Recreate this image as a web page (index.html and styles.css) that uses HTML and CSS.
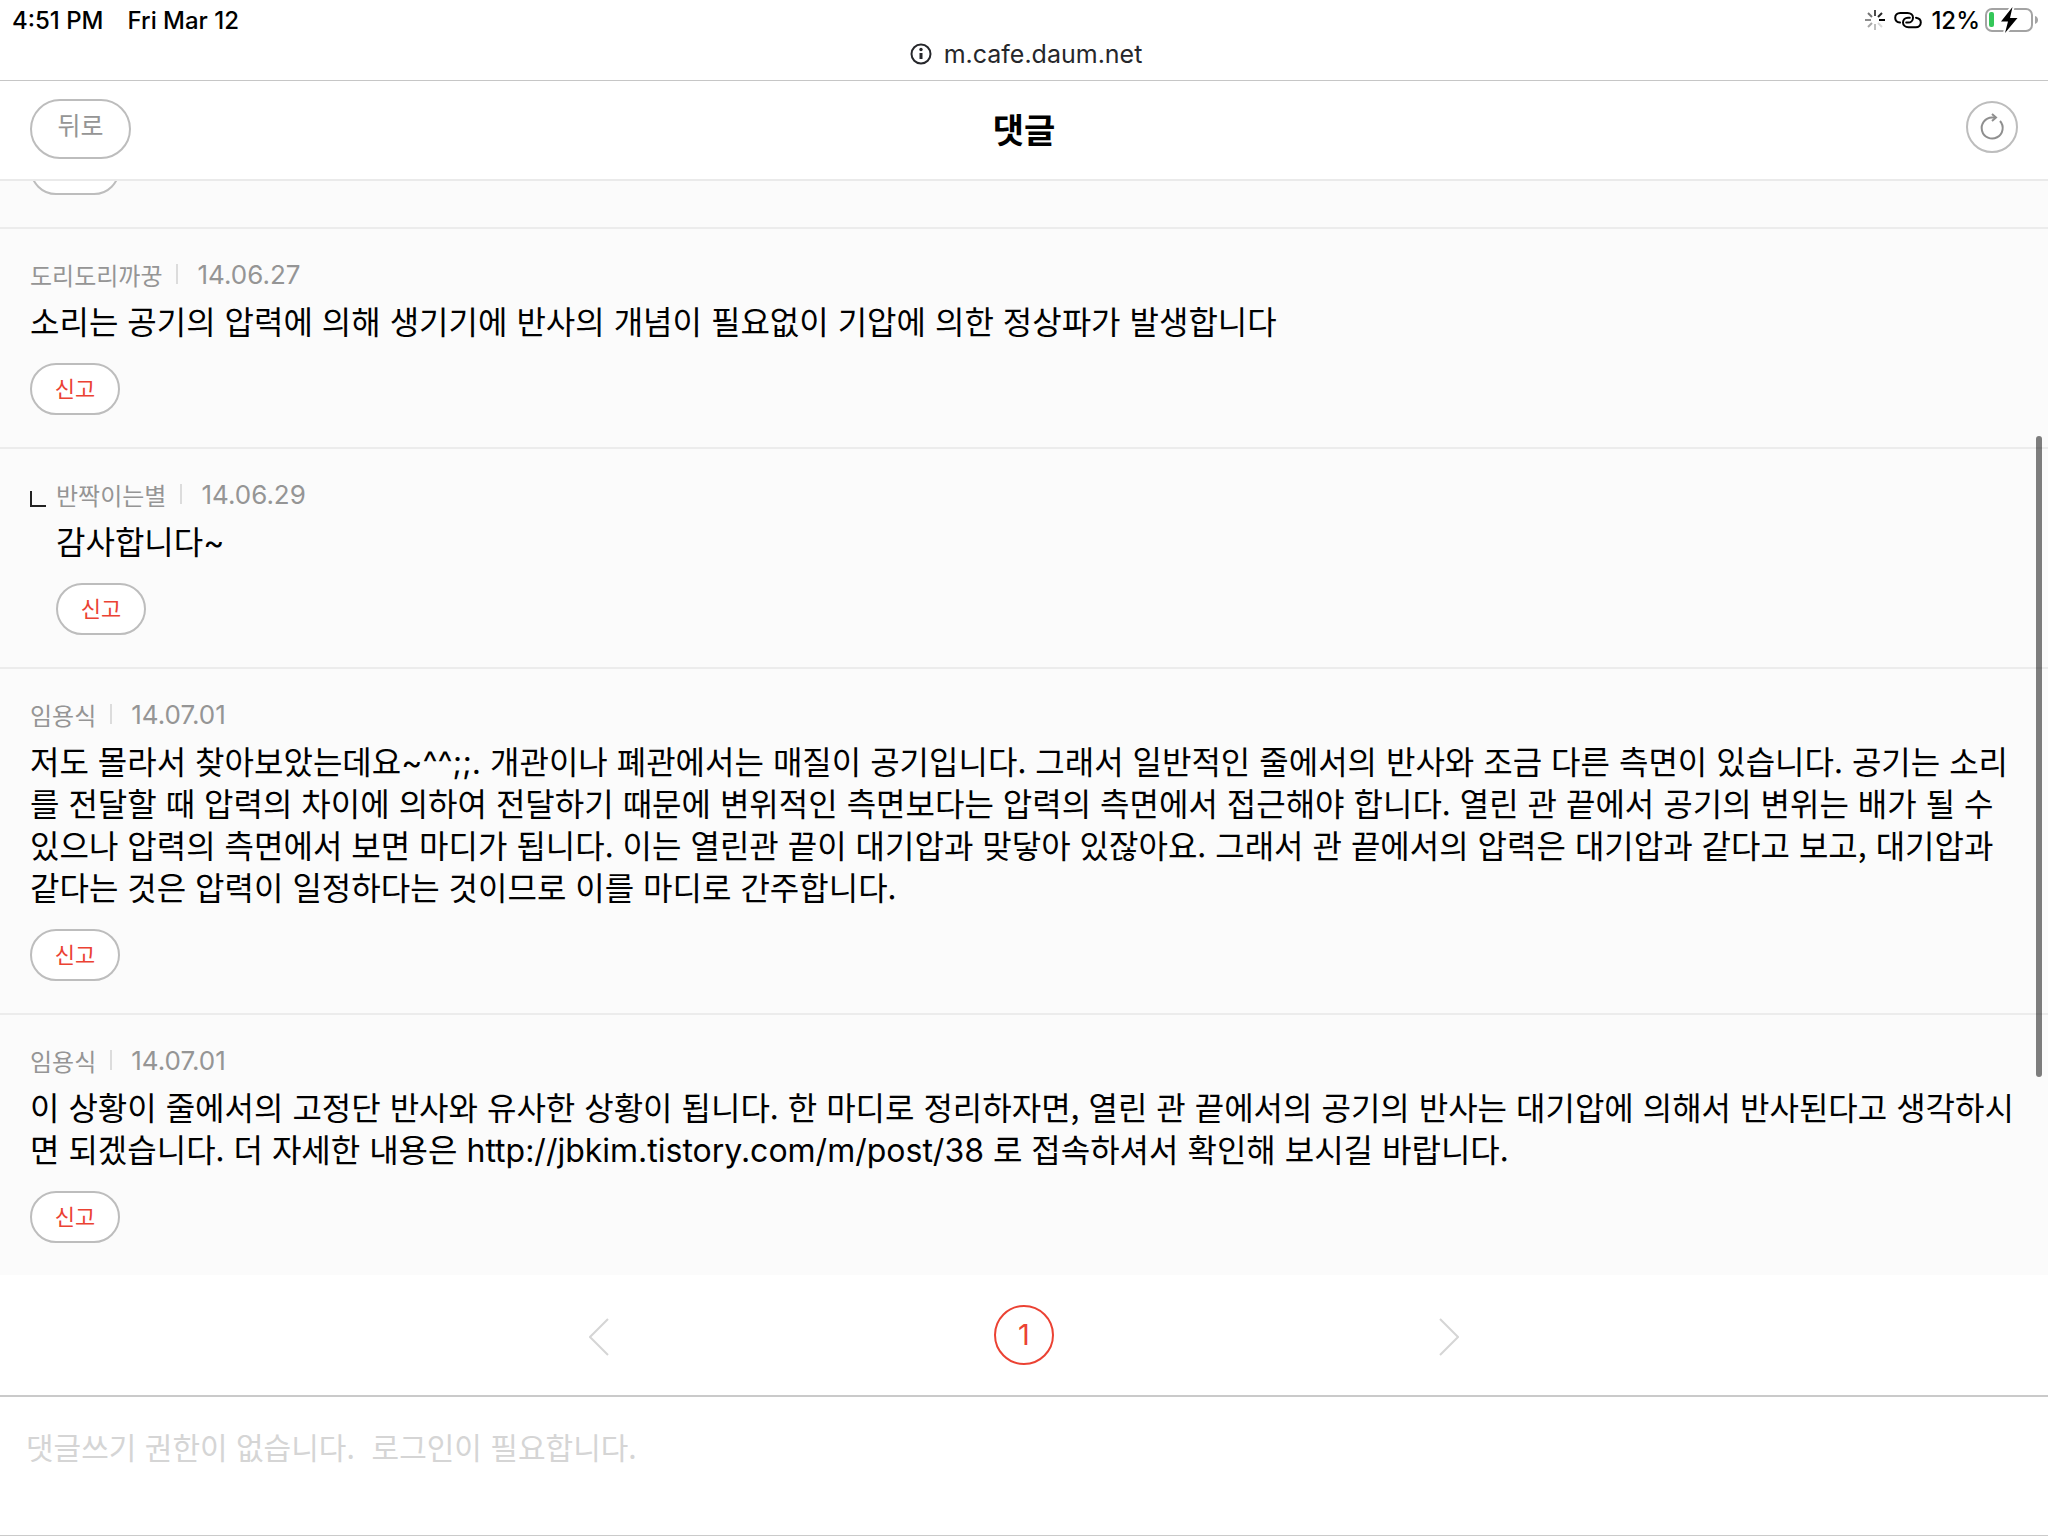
FILE: index.html
```
<!DOCTYPE html>
<html lang="ko">

<head>
    <meta charset="utf-8">
    <meta name="viewport" content="width=device-width, initial-scale=1">
    <title>댓글</title>
    <link rel="stylesheet" href="styles.css">
</head>

<body>
    <div class="browser">
        <div class="status">
            <span class="time">4:51 PM</span>
            <span>Fri Mar 12</span>
            <div class="status_right">
                <svg class="ico_spin" width="20" height="20" viewBox="0 0 20 20" fill="none" stroke="#000" stroke-width="2">
                    <path d="M10 0v6" opacity=".7" />
                    <path d="M17 3l-4 4" opacity=".85" />
                    <path d="M20 10h-6" />
                    <path d="M17 17l-4-4" opacity=".15" />
                    <path d="M10 20v-6" opacity=".25" />
                    <path d="M3 17l4-4" opacity=".35" />
                    <path d="M0 10h6" opacity=".45" />
                    <path d="M3 3l4 4" opacity=".55" />
                </svg>
                <svg class="ico_link" width="28" height="18" viewBox="0 0 28 18" fill="none" stroke="#000" stroke-width="2" stroke-linecap="round">
                    <path d="M6 11.6C2.900 11.200 1.200 9.200 1.200 6.700C1.200 3.800 3.400 2 6.200 2h7.300C16.800 2 19 4 19 6.700c0 2.900-2.200 4.900-5 4.900h-1.800" />
                    <path d="M22 6.700c3.100.4 4.800 2.300 4.800 4.800c0 2.800-2.200 4.700-5 4.700h-7.300C11.200 16.200 9 14.200 9 11.500c0-2.800 2.200-4.800 5-4.800h1.800" />
                </svg>
                <span class="percent">12%</span>
                <svg class="ico_battery" width="53" height="26" viewBox="0 0 53 26">
                    <rect x="1" y="2" width="46" height="22" rx="6" fill="none" stroke="#a3a3a3" stroke-width="2" />
                    <rect x="4" y="5" width="5" height="15" rx="2" fill="#34c759" />
                    <path d="M50 9c2 .6 3 2.200 3 4s-1 3.400-3 4z" fill="#a3a3a3" />
                    <path d="M27.500 0L16 14.500h7L20 26L32.500 11H25z" fill="#000" stroke="#fff" stroke-width="4" stroke-linejoin="round" paint-order="stroke" />
                </svg>
            </div>
        </div>
        <div class="address">
            <svg width="22" height="22" viewBox="0 0 22 22" fill="none" stroke="#26272b" stroke-width="2">
                <circle cx="11" cy="11" r="9.500" />
                <path d="M11 10v6" stroke-width="3" />
                <circle cx="11" cy="6.500" r="1.700" fill="#26272b" stroke="none" />
            </svg>
            <span>m.cafe.daum.net</span>
        </div>
    </div>

    <header class="header">
        <button type="button" class="btn_back">뒤로</button>
        <h1>댓글</h1>
        <button type="button" class="btn_refresh" aria-label="새로고침">
            <svg width="26" height="28" viewBox="0 0 26 28" fill="none" stroke="#8f8f8f" stroke-width="2">
                <path d="M16 4.500H13A10.500 10.500 0 1 0 21 8" />
                <path d="M13 1l4 3.500l-4 3.500" />
            </svg>
        </button>
    </header>

    <main>
        <ul class="comments">
            <li class="comment">
                <button type="button" class="btn_report" aria-label="신고"></button>
            </li>
            <li class="comment">
                <div class="info"><span class="name">도리도리까꿍</span><span class="date">14.06.27</span></div>
                <p>소리는 공기의 압력에 의해 생기기에 반사의 개념이 필요없이 기압에 의한 정상파가 발생합니다</p>
                <button type="button" class="btn_report">신고</button>
            </li>
            <li class="comment reply">
                <div class="info"><span class="name">반짝이는별</span><span class="date">14.06.29</span></div>
                <p>감사합니다<span class="latin">~</span></p>
                <button type="button" class="btn_report">신고</button>
            </li>
            <li class="comment">
                <div class="info"><span class="name">임용식</span><span class="date">14.07.01</span></div>
                <p>저도 몰라서 찾아보았는데요<span class="latin">~^^;;.</span> 개관이나 폐관에서는 매질이 공기입니다. 그래서 일반적인 줄에서의 반사와 조금 다른 측면이 있습니다. 공기는 소리를 전달할 때 압력의 차이에 의하여 전달하기 때문에 변위적인 측면보다는 압력의 측면에서 접근해야 합니다. 열린 관 끝에서 공기의 변위는 배가 될 수 있으나 압력의 측면에서 보면 마디가 됩니다. 이는 열린관 끝이 대기압과 맞닿아 있잖아요. 그래서 관 끝에서의 압력은 대기압과 같다고 보고, 대기압과 같다는 것은 압력이 일정하다는 것이므로 이를 마디로 간주합니다.</p>
                <button type="button" class="btn_report">신고</button>
            </li>
            <li class="comment">
                <div class="info"><span class="name">임용식</span><span class="date">14.07.01</span></div>
                <p>이 상황이 줄에서의 고정단 반사와 유사한 상황이 됩니다. 한 마디로 정리하자면, 열린 관 끝에서의 공기의 반사는 대기압에 의해서 반사된다고 생각하시면 되겠습니다. 더 자세한 내용은 <span class="latin">http://jbkim.tistory.com/m/post/38</span> 로 접속하셔서 확인해 보시길 바랍니다.</p>
                <button type="button" class="btn_report">신고</button>
            </li>
        </ul>

        <nav class="paging">
            <button type="button" class="btn_page" aria-label="이전">
                <svg width="20" height="38" viewBox="0 0 20 38" fill="none" stroke="#d5d5d5" stroke-width="2"><path d="M19 1L1 19l18 18" /></svg>
            </button>
            <a href="#" class="page_on">1</a>
            <button type="button" class="btn_page" aria-label="다음">
                <svg width="20" height="38" viewBox="0 0 20 38" fill="none" stroke="#d5d5d5" stroke-width="2"><path d="M1 1l18 18L1 37" /></svg>
            </button>
        </nav>
    </main>

    <form class="write">
        <textarea aria-label="댓글쓰기" placeholder="댓글쓰기 권한이 없습니다.  로그인이 필요합니다."></textarea>
    </form>

    <div class="scrollbar"></div>
</body>

</html>
```
FILE: styles.css
```
* {
    box-sizing: border-box;
}

body {
    display: flex;
    flex-direction: column;
    min-height: 100vh;
    margin: 0;
    background: #fff;
    color: #000;
    font-family: "Noto Sans CJK KR", sans-serif;
}

button {
    padding: 0;
    border: 0;
    background: none;
    font-family: inherit;
}

svg {
    display: block;
}

/* browser bar */
.browser {
    border-bottom: 1px solid #c6c6c6;
    font-family: Inter, sans-serif;
}

.status {
    display: flex;
    align-items: center;
    height: 40px;
    padding: 0 10px 0 12px;
    font-size: 24px;
    font-weight: 500;
}

.time {
    margin-right: 24px;
}

.status_right {
    display: flex;
    align-items: center;
    margin-left: auto;
}

.ico_link {
    margin: 0 9px;
}

.percent {
    margin-right: 5px;
}

.address {
    display: flex;
    justify-content: center;
    align-items: center;
    gap: 12px;
    height: 40px;
    padding: 0 0 12px 4px;
    color: #26272b;
    font-size: 25px;
    line-height: 28px;
}

/* header */
.header {
    display: grid;
    grid-template-columns: 1fr auto 1fr;
    align-items: center;
    padding: 18px 30px 20px;
    border-bottom: 2px solid #eaeaea;
}

.header h1 {
    margin: 0;
    font-size: 34px;
    line-height: 40px;
}

.btn_back {
    width: 101px;
    height: 60px;
    padding-bottom: 10px;
    border: 2px solid #bdbdbd;
    border-radius: 30px;
    color: #959595;
    font-size: 25px;
}

.btn_refresh {
    display: flex;
    justify-content: center;
    align-items: center;
    justify-self: end;
    width: 52px;
    height: 52px;
    margin-bottom: 4px;
    border: 2px solid #bdbdbd;
    border-radius: 50%;
}

/* comments */
.comments {
    margin: 0;
    padding: 0;
    overflow: hidden;
    background: #fbfbfb;
    list-style: none;
}

.comment {
    padding: 30px 30px 32px;
}

.comment + .comment {
    border-top: 2px solid #ececec;
}

/* scrolled under the header */
.comment:first-child {
    margin-top: -68px;
}

.info {
    display: flex;
    align-items: center;
    height: 30px;
    margin-bottom: 10px;
    color: #959595;
    font-size: 24px;
}

.date {
    display: flex;
    align-items: center;
    font-family: Inter, sans-serif;
    font-size: 26px;
}

.date:before {
    content: "";
    width: 2px;
    height: 20px;
    margin: 0 19px 0 14px;
    background: #dcdcdc;
}

.comment p {
    margin: 0 0 22px;
    font-size: 32px;
    line-height: 42px;
}

.latin {
    font-family: Inter, sans-serif;
    line-height: 32px;
}

.btn_report {
    display: block;
    width: 90px;
    height: 52px;
    padding-bottom: 5px;
    border: 2px solid #bdbdbd;
    border-radius: 26px;
    background: #fff;
    color: #eb4233;
    font-size: 22px;
}

.reply {
    position: relative;
    padding-left: 56px;
}

.reply:before {
    content: "";
    position: absolute;
    top: 42px;
    left: 30px;
    width: 14px;
    height: 14px;
    border: solid #222;
    border-width: 0 0 2px 2px;
}

/* paging */
.paging {
    display: flex;
    justify-content: space-between;
    align-items: center;
    width: 870px;
    max-width: 100%;
    height: 120px;
    margin: 0 auto;
}

.btn_page {
    padding-top: 4px;
}

.page_on {
    width: 60px;
    height: 60px;
    border: 2px solid #eb4233;
    border-radius: 50%;
    color: #eb4233;
    font-family: Inter, sans-serif;
    font-size: 29px;
    line-height: 56px;
    text-align: center;
    text-decoration: none;
}

/* write */
.write {
    display: flex;
    flex: 1;
    border-top: 2px solid #cacaca;
    border-bottom: 1px solid #cacaca;
}

.write textarea {
    flex: 1;
    height: 138px;
    padding: 28px 26px;
    border: 0;
    outline: 0;
    background: none;
    resize: none;
    font-family: inherit;
    font-size: 30px;
    line-height: 42px;
}

.write textarea::placeholder {
    color: #d5d5d5;
}

.scrollbar {
    position: absolute;
    top: 436px;
    right: 6px;
    width: 6px;
    height: 641px;
    border-radius: 3px;
    background: rgba(0, 0, 0, .5);
}
```
